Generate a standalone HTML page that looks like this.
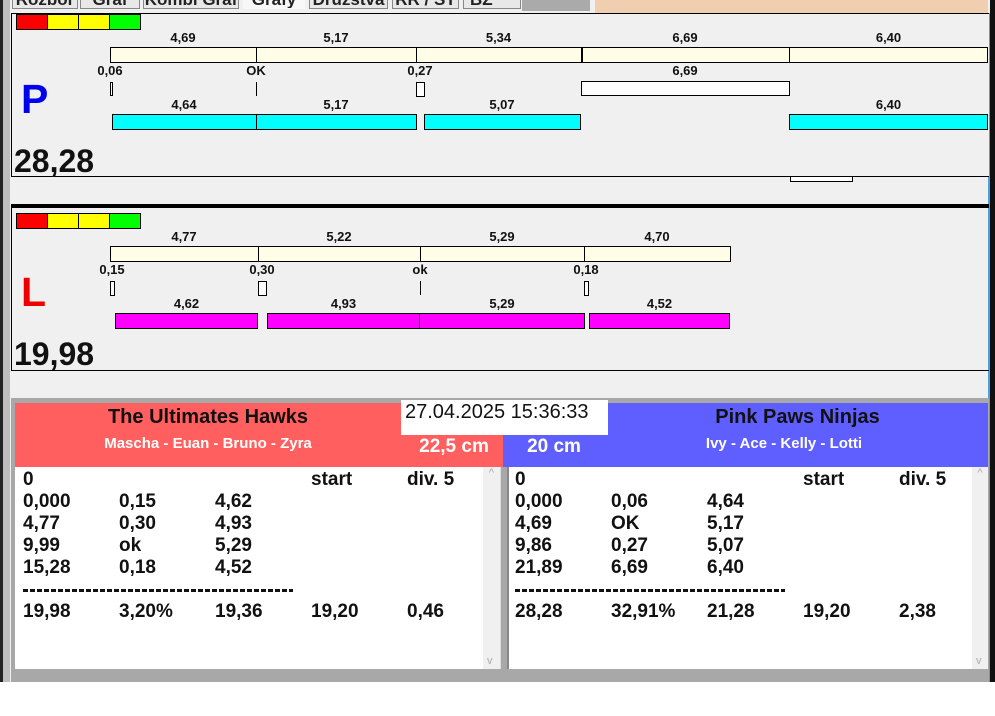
<!DOCTYPE html>
<html><head><meta charset="utf-8"><style>
*{margin:0;padding:0}
body{width:995px;height:716px;background:#fff;position:relative;overflow:hidden;font-family:"Liberation Sans",Arial,sans-serif}
div{position:absolute;box-sizing:border-box}
.b{border:1px solid #000}
.y{background:#fffde6}
.c{background:#00ffff}
.m{background:#ff00ff}
.w{background:#fff}
.l{font-weight:bold;font-size:13px;text-align:center;line-height:14px;color:#111}
.t{font-weight:bold;font-size:19px;line-height:22px;color:#111;margin-top:1px}
.tab{top:-10px;height:19px;border:1px solid #888;background:#e8e8e8;font-size:17px;font-weight:bold;line-height:18px;color:#222;text-align:center;overflow:hidden;white-space:nowrap}
.dash{height:3px;background:repeating-linear-gradient(90deg,#111 0 5px,transparent 5px 7px)}
</style></head><body>
<div style="left:0;top:0;width:995px;height:682px;background:#f0f0f0"></div>
<div style="left:0;top:0;width:3px;height:682px;background:#222"></div>
<div style="left:3px;top:0;width:7px;height:682px;background:#bdbdbd"></div>
<div style="left:990px;top:0;width:5px;height:682px;background:#111"></div>
<div style="left:988px;top:0;width:2px;height:682px;background:#4aa0e0"></div>
<div style="left:10px;top:0;width:980px;height:13px;background:#f0f0f0"></div>
<div class="tab" style="left:12px;width:66px">Rozbor</div>
<div class="tab" style="left:80px;width:60px">Graf</div>
<div class="tab" style="left:143px;width:96px">Kombi Graf</div>
<div class="tab" style="left:243px;width:62px;background:#f8f8f8;border-color:#f8f8f8">Grafy</div>
<div class="tab" style="left:309px;width:79px">Družstva</div>
<div class="tab" style="left:392px;width:67px">RR / ST</div>
<div class="tab" style="left:463px;width:58px;text-align:left;padding-left:6px">BZ</div>
<div style="left:522px;top:0;width:68px;height:11px;background:#aaa"></div>
<div style="left:595px;top:0;width:393px;height:13px;background:#efcfb0"></div>
<div style="left:11px;top:13px;width:978px;height:164px;border-top:1px solid #000;border-left:1px solid #000;border-bottom:1px solid #000;background:#f0f0f0"></div>
<div class="b" style="left:16px;top:14px;width:32px;height:16px;background:#f00"></div>
<div class="b" style="left:47px;top:14px;width:32px;height:16px;background:#ff0"></div>
<div class="b" style="left:78px;top:14px;width:32px;height:16px;background:#ff0"></div>
<div class="b" style="left:109px;top:14px;width:32px;height:16px;background:#0f0"></div>

<div class="l" style="left:110px;top:31px;width:146px">4,69</div>
<div class="l" style="left:256px;top:31px;width:160px">5,17</div>
<div class="l" style="left:416px;top:31px;width:165px">5,34</div>
<div class="l" style="left:581px;top:31px;width:208px">6,69</div>
<div class="l" style="left:789px;top:31px;width:199px">6,40</div>
<div class="b y" style="left:110px;top:47px;width:147px;height:16px"></div>
<div class="b y" style="left:256px;top:47px;width:161px;height:16px"></div>
<div class="b y" style="left:416px;top:47px;width:166px;height:16px"></div>
<div class="b y" style="left:581px;top:47px;width:209px;height:16px;border-left-width:2px"></div>
<div class="b y" style="left:789px;top:47px;width:199px;height:16px"></div>

<div class="l" style="left:92px;top:64px;width:36px">0,06</div>
<div class="l" style="left:236px;top:64px;width:40px">OK</div>
<div class="l" style="left:402px;top:64px;width:36px">0,27</div>
<div class="l" style="left:581px;top:64px;width:208px">6,69</div>
<div class="b w" style="left:110px;top:82px;width:3px;height:14px"></div>
<div style="left:256px;top:82px;width:1px;height:14px;background:#000"></div>
<div class="b w" style="left:416px;top:82px;width:9px;height:15px"></div>
<div class="b w" style="left:581px;top:81px;width:209px;height:15px"></div>

<div class="l" style="left:112px;top:98px;width:144px">4,64</div>
<div class="l" style="left:256px;top:98px;width:160px">5,17</div>
<div class="l" style="left:424px;top:98px;width:156px">5,07</div>
<div class="l" style="left:789px;top:98px;width:199px">6,40</div>
<div class="b c" style="left:112px;top:114px;width:145px;height:16px"></div>
<div class="b c" style="left:256px;top:114px;width:161px;height:16px"></div>
<div class="b c" style="left:424px;top:114px;width:157px;height:16px"></div>
<div class="b c" style="left:789px;top:114px;width:199px;height:16px"></div>

<div style="left:21px;top:76px;font-size:41px;font-weight:bold;color:#0000ee;line-height:46px">P</div>
<div style="left:14px;top:143px;font-size:32px;font-weight:bold;color:#111;line-height:36px">28,28</div>
<div class="b w" style="left:790px;top:176px;width:63px;height:6px"></div>

<div style="left:11px;top:204px;width:978px;height:4px;background:#000"></div>
<div style="left:11px;top:208px;width:978px;height:163px;border-left:1px solid #000;border-bottom:1px solid #000"></div>
<div class="b" style="left:16px;top:213px;width:32px;height:16px;background:#f00"></div>
<div class="b" style="left:47px;top:213px;width:32px;height:16px;background:#ff0"></div>
<div class="b" style="left:78px;top:213px;width:32px;height:16px;background:#ff0"></div>
<div class="b" style="left:109px;top:213px;width:32px;height:16px;background:#0f0"></div>

<div class="l" style="left:110px;top:230px;width:148px">4,77</div>
<div class="l" style="left:258px;top:230px;width:162px">5,22</div>
<div class="l" style="left:420px;top:230px;width:164px">5,29</div>
<div class="l" style="left:584px;top:230px;width:146px">4,70</div>
<div class="b y" style="left:110px;top:246px;width:149px;height:16px"></div>
<div class="b y" style="left:258px;top:246px;width:163px;height:16px"></div>
<div class="b y" style="left:420px;top:246px;width:165px;height:16px"></div>
<div class="b y" style="left:584px;top:246px;width:147px;height:16px"></div>

<div class="l" style="left:92px;top:263px;width:40px">0,15</div>
<div class="l" style="left:242px;top:263px;width:40px">0,30</div>
<div class="l" style="left:400px;top:263px;width:40px">ok</div>
<div class="l" style="left:566px;top:263px;width:40px">0,18</div>
<div class="b w" style="left:110px;top:281px;width:5px;height:15px"></div>
<div class="b w" style="left:258px;top:281px;width:9px;height:15px"></div>
<div style="left:420px;top:281px;width:1px;height:14px;background:#000"></div>
<div class="b w" style="left:584px;top:281px;width:5px;height:15px"></div>

<div class="l" style="left:115px;top:297px;width:143px">4,62</div>
<div class="l" style="left:267px;top:297px;width:153px">4,93</div>
<div class="l" style="left:420px;top:297px;width:164px">5,29</div>
<div class="l" style="left:589px;top:297px;width:141px">4,52</div>
<div class="b m" style="left:115px;top:313px;width:143px;height:16px"></div>
<div class="b m" style="left:267px;top:313px;width:154px;height:16px"></div>
<div class="b m" style="left:419px;top:313px;width:166px;height:16px"></div>
<div class="b m" style="left:589px;top:313px;width:141px;height:16px"></div>

<div style="left:21px;top:269px;font-size:41px;font-weight:bold;color:#ee0000;line-height:46px">L</div>
<div style="left:14px;top:336px;font-size:32px;font-weight:bold;color:#111;line-height:36px">19,98</div>

<div style="left:11px;top:398px;width:978px;height:284px;background:#a8a8a8"></div>
<div style="left:15px;top:403px;width:488px;height:64px;background:#ff5f5f"></div>
<div style="left:503px;top:403px;width:485px;height:64px;background:#5f5fff"></div>
<div style="left:15px;top:405px;width:386px;text-align:center;font-weight:bold;font-size:20px;color:#111;line-height:24px">The Ultimates Hawks</div>
<div style="left:15px;top:435px;width:386px;text-align:center;font-weight:bold;font-size:15px;color:#fff;line-height:18px">Mascha - Euan - Bruno - Zyra</div>
<div style="left:607px;top:405px;width:381px;text-align:center;font-weight:bold;font-size:20px;color:#111;line-height:24px">Pink Paws Ninjas</div>
<div style="left:607px;top:435px;width:354px;text-align:center;font-weight:bold;font-size:15px;color:#fff;line-height:18px">Ivy - Ace - Kelly - Lotti</div>
<div style="left:401px;top:400px;width:207px;height:35px;background:#fff;font-size:20px;line-height:24px;padding-left:4px;color:#111">27.04.2025 15:36:33</div>
<div style="left:410px;top:436px;width:88px;text-align:center;font-weight:bold;font-size:19px;color:#fff;line-height:22px">22,5 cm</div>
<div style="left:515px;top:436px;width:78px;text-align:center;font-weight:bold;font-size:19px;color:#fff;line-height:22px">20 cm</div>

<div style="left:15px;top:467px;width:486px;height:202px;background:#fff;border-right:2px solid #ddd"></div>
<div style="left:483px;top:467px;width:17px;height:202px;background:#f0f0f0;color:#aaa;font-size:11px;text-align:center">^<br><span style="position:absolute;bottom:2px;left:4px">v</span></div>
<div style="left:507px;top:467px;width:481px;height:202px;background:#fff;border-left:2px solid #888"></div>
<div style="left:972px;top:467px;width:16px;height:202px;background:#f0f0f0;color:#aaa;font-size:11px;text-align:center">^<br><span style="position:absolute;bottom:2px;left:4px">v</span></div>

<div class="t" style="left:23px;top:468px">0</div>
<div class="t" style="left:311px;top:468px">start</div><div class="t" style="left:407px;top:468px">div. 5</div>
<div class="t" style="left:23px;top:490px">0,000</div><div class="t" style="left:119px;top:490px">0,15</div><div class="t" style="left:215px;top:490px">4,62</div>
<div class="t" style="left:23px;top:512px">4,77</div><div class="t" style="left:119px;top:512px">0,30</div><div class="t" style="left:215px;top:512px">4,93</div>
<div class="t" style="left:23px;top:534px">9,99</div><div class="t" style="left:119px;top:534px">ok</div><div class="t" style="left:215px;top:534px">5,29</div>
<div class="t" style="left:23px;top:556px">15,28</div><div class="t" style="left:119px;top:556px">0,18</div><div class="t" style="left:215px;top:556px">4,52</div>
<div class="dash" style="left:23px;top:589px;width:270px"></div>
<div class="t" style="left:23px;top:600px">19,98</div><div class="t" style="left:119px;top:600px">3,20%</div><div class="t" style="left:215px;top:600px">19,36</div><div class="t" style="left:311px;top:600px">19,20</div><div class="t" style="left:407px;top:600px">0,46</div>

<div class="t" style="left:515px;top:468px">0</div>
<div class="t" style="left:803px;top:468px">start</div><div class="t" style="left:899px;top:468px">div. 5</div>
<div class="t" style="left:515px;top:490px">0,000</div><div class="t" style="left:611px;top:490px">0,06</div><div class="t" style="left:707px;top:490px">4,64</div>
<div class="t" style="left:515px;top:512px">4,69</div><div class="t" style="left:611px;top:512px">OK</div><div class="t" style="left:707px;top:512px">5,17</div>
<div class="t" style="left:515px;top:534px">9,86</div><div class="t" style="left:611px;top:534px">0,27</div><div class="t" style="left:707px;top:534px">5,07</div>
<div class="t" style="left:515px;top:556px">21,89</div><div class="t" style="left:611px;top:556px">6,69</div><div class="t" style="left:707px;top:556px">6,40</div>
<div class="dash" style="left:515px;top:589px;width:270px"></div>
<div class="t" style="left:515px;top:600px">28,28</div><div class="t" style="left:611px;top:600px">32,91%</div><div class="t" style="left:707px;top:600px">21,28</div><div class="t" style="left:803px;top:600px">19,20</div><div class="t" style="left:899px;top:600px">2,38</div>
</body></html>
